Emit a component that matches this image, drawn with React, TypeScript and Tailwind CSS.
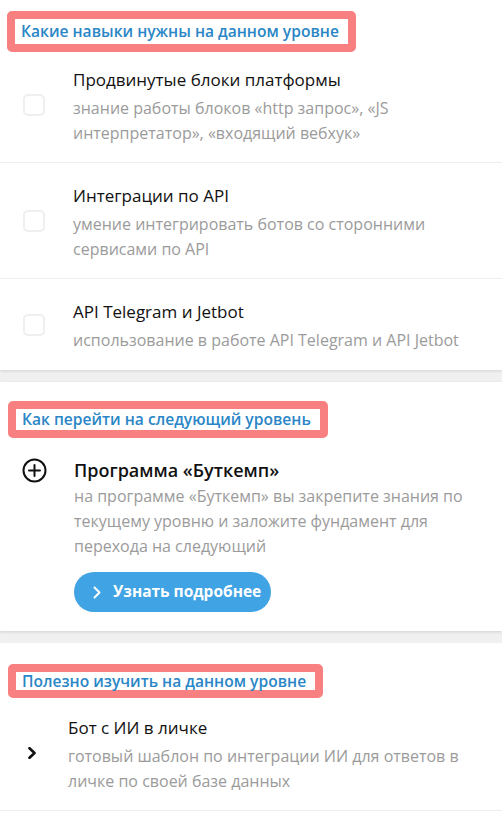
import React from "react";

const font = { fontFamily: '"Open Sans", "Noto Sans", sans-serif' };

function Heading({ text, lead }: { text: string; lead: string }) {
  return (
    <div className="inline-block border-[8px] border-[#f88080] rounded-[5px]">
      <div className={`bg-white pl-[6px] pr-[9px] text-[15.6px] font-semibold text-[#2a86c6] ${lead}`}>{text}</div>
    </div>
  );
}

function Check() {
  return <div className="w-[22px] h-[22px] shrink-0 rounded-[5px] border-2 border-[#efefef] bg-white" />;
}

function SkillItem({ title, desc, last }: { title: string; desc: string; last?: boolean }) {
  return (
    <div className={`flex items-center pl-[23px] pr-[20px] ${last ? "" : "border-b border-[#efefef]"}`}>
      <Check />
      <div className={`ml-[28px] pt-5 ${last ? "pb-[17px]" : "pb-[16px]"}`}>
        <div className="text-[17px] leading-[26px] text-[#111]">{title}</div>
        <div className="mt-[3px] text-[16px] leading-[25px] text-[#9b9b9b]">{desc}</div>
      </div>
    </div>
  );
}

export default function App() {
  return (
    <div className="w-[502px] min-h-[827px] bg-[#f0f0f0]" style={font}>
      <section className="bg-white shadow-[0_1px_3px_rgba(0,0,0,0.13)]">
        <div className="h-[47px] pt-[11px] pl-[7px]">
          <Heading text="Какие навыки нужны на данном уровне" lead="leading-[25px]" />
        </div>
        <SkillItem
          title="Продвинутые блоки платформы"
          desc="знание работы блоков «http запрос», «JS интерпретатор», «входящий вебхук»"
        />
        <SkillItem title="Интеграции по API" desc="умение интегрировать ботов со сторонними сервисами по API" />
        <SkillItem title="API Telegram и Jetbot" desc="использование в работе API Telegram и API Jetbot" last />
      </section>

      <section className="mt-[12px] bg-white shadow-[0_1px_3px_rgba(0,0,0,0.13)]">
        <div className="h-[55px] pt-[19px] pl-[8px]">
          <Heading text="Как перейти на следующий уровень" lead="leading-[21px]" />
        </div>
        <div className="flex pl-[22px] pr-[20px] pt-5 pb-[19px]">
          <svg width="25" height="25" viewBox="0 0 25 25" className="shrink-0 mt-[1px]">
            <circle cx="12.5" cy="12.5" r="11" fill="none" stroke="#111" strokeWidth="2" />
            <path d="M12.5 7v11M7 12.5h11" stroke="#111" strokeWidth="2" strokeLinecap="round" />
          </svg>
          <div className="ml-[27px]">
            <div className="text-[18px] leading-[26px] font-semibold text-[#111]">Программа «Буткемп»</div>
            <div className="mt-[1px] text-[16px] leading-[25px] text-[#9b9b9b]">
              на программе «Буткемп» вы закрепите знания по текущему уровню и заложите фундамент для перехода на следующий
            </div>
            <button className="mt-[13px] h-[40px] w-[197px] rounded-full bg-[#40a3e3] flex items-center pl-[19px] text-white text-[15.5px] font-bold">
              <svg width="8" height="13" viewBox="0 0 8 13" className="mr-[12px]">
                <path d="M1.5 1.5l5 5-5 5" fill="none" stroke="#fff" strokeWidth="2" strokeLinecap="round" strokeLinejoin="round" />
              </svg>
              Узнать подробнее
            </button>
          </div>
        </div>
      </section>

      <section className="mt-[12px] bg-white">
        <div className="h-[52px] pt-[21px] pl-[8px]">
          <Heading text="Полезно изучить на данном уровне" lead="leading-[18px]" />
        </div>
        <div className="flex items-center pl-[28px] pr-[20px] border-b border-[#efefef]">
          <svg width="9" height="12" viewBox="0 0 9 12" className="shrink-0">
            <path d="M1.5 1.2l5 4.8-5 4.8" fill="none" stroke="#111" strokeWidth="2.6" strokeLinecap="round" strokeLinejoin="round" />
          </svg>
          <div className="ml-[31px] pt-5 pb-[16px]">
            <div className="text-[17px] leading-[26px] text-[#111]">Бот с ИИ в личке</div>
            <div className="mt-[3px] text-[16px] leading-[25px] text-[#9b9b9b]">
              готовый шаблон по интеграции ИИ для ответов в личке по своей базе данных
            </div>
          </div>
        </div>
        <div className="h-[40px]" />
      </section>
    </div>
  );
}
